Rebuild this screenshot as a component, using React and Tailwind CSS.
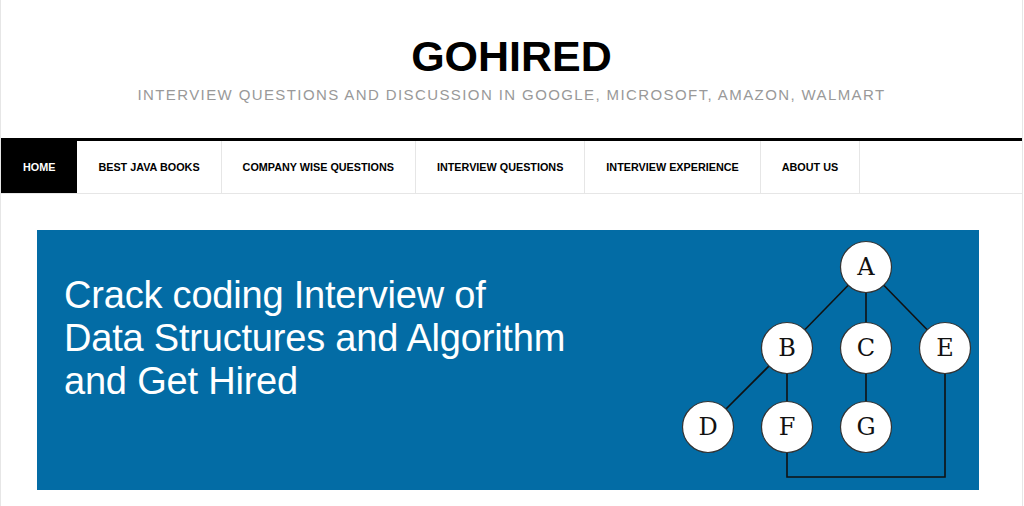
import React from "react";

const navItems = [
  "Home",
  "Best Java Books",
  "Company Wise Questions",
  "Interview Questions",
  "Interview Experience",
  "About Us",
];

const nodes = [
  { id: "A", x: 187, y: 37 },
  { id: "B", x: 108, y: 118 },
  { id: "C", x: 187, y: 118 },
  { id: "E", x: 266, y: 118 },
  { id: "D", x: 29, y: 197 },
  { id: "F", x: 108, y: 197 },
  { id: "G", x: 187, y: 197 },
];

const TreeDrawing = () => {
  return (
    <svg width="300" height="260" viewBox="0 0 300 260" className="shrink-0">
      <g stroke="#111" strokeWidth="1.6" fill="none">
        <line x1="187" y1="37" x2="108" y2="118" />
        <line x1="187" y1="37" x2="187" y2="118" />
        <line x1="187" y1="37" x2="266" y2="118" />
        <line x1="108" y1="118" x2="29" y2="197" />
        <line x1="108" y1="118" x2="108" y2="197" />
        <line x1="187" y1="118" x2="187" y2="197" />
        <polyline points="108,197 108,247 266,247 266,118" />
      </g>
      {nodes.map((n) => (
        <g key={n.id}>
          <circle cx={n.x} cy={n.y} r="25.5" fill="#fff" stroke="#333" strokeWidth="1.2" />
          <text
            x={n.x}
            y={n.y + 8}
            textAnchor="middle"
            fontSize="24"
            fill="#111"
            fontFamily="'DejaVu Serif', serif"
          >
            {n.id}
          </text>
        </g>
      ))}
    </svg>
  );
};

const App = () => {
  return (
    <div className="w-[1023px] h-[506px] bg-white border-x border-[#e6e6e6] font-['Liberation_Sans',Arial,sans-serif] overflow-hidden">
      <header className="flex flex-col items-center pt-[31px] pb-[34px]">
        <h1 className="text-[43px] leading-[50px] font-bold text-black">
          GOHIRED
        </h1>
        <p className="mt-[5px] text-[15px] leading-[18px] text-[#999] tracking-[1.4px]">
          INTERVIEW QUESTIONS AND DISCUSSION IN GOOGLE, MICROSOFT, AMAZON, WALMART
        </p>
      </header>
      <nav className="border-t-[3px] border-black border-b border-b-[#e6e6e6] flex h-[56px]">
        {navItems.map((item, i) => (
          <div
            key={item}
            className={
              i === 0
                ? "flex items-center px-[22px] bg-black text-white text-[10.8px] font-bold uppercase"
                : "flex items-center px-[21px] border-r border-[#e6e6e6] text-black text-[10.8px] font-bold uppercase"
            }
          >
            {item}
          </div>
        ))}
      </nav>
      <section className="ml-[36px] mt-[36px] w-[942px] h-[260px] bg-[#036ca5] flex">
        <h2 className="pl-[27px] pt-[44px] text-white text-[38px] leading-[43px] font-normal tracking-[-0.2px]">
          Crack coding Interview of
          <br />
          Data Structures and Algorithm
          <br />
          and Get Hired
        </h2>
        <div className="ml-auto">
          <TreeDrawing />
        </div>
      </section>
    </div>
  );
};

export default App;
